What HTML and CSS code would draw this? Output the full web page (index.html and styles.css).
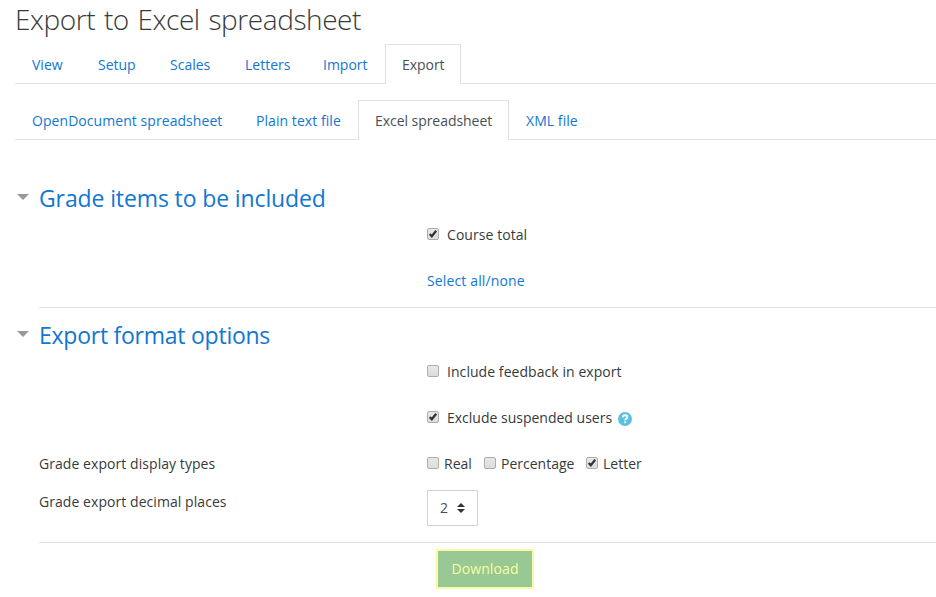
FILE: index.html
```html
<!DOCTYPE html>
<html lang="en">
<head>
<meta charset="utf-8">
<title>Export to Excel spreadsheet</title>
<link rel="stylesheet" href="styles.css">
</head>
<body>
<main class="page">
  <h1 class="title">Export to Excel spreadsheet</h1>
  <nav class="tabs primary">
    <a class="tab">View</a>
    <a class="tab">Setup</a>
    <a class="tab">Scales</a>
    <a class="tab">Letters</a>
    <a class="tab">Import</a>
    <a class="tab active">Export</a>
  </nav>
  <nav class="tabs secondary">
    <a class="tab wide">OpenDocument spreadsheet</a>
    <a class="tab wide">Plain text file</a>
    <a class="tab active">Excel spreadsheet</a>
    <a class="tab wide">XML file</a>
  </nav>
  <form>
    <section class="group">
      <h2 class="legend"><i class="caret"></i><span class="legend-items">Grade items to be included</span></h2>
      <div class="row"><div class="field"><i class="box checked"><svg viewBox="0 0 12 12"><path d="M2.7 6.1l2.1 2.2 4.4-5.5"/></svg></i><span class="option wide">Course total</span></div></div>
      <div class="row"><div class="field"><a class="link">Select all/none</a></div></div>
    </section>
    <section class="group options">
      <h2 class="legend"><i class="caret"></i><span class="legend-format">Export format options</span></h2>
      <div class="row"><div class="field"><i class="box"></i><span class="option wide">Include feedback in export</span></div></div>
      <div class="row"><div class="field"><i class="box checked"><svg viewBox="0 0 12 12"><path d="M2.7 6.1l2.1 2.2 4.4-5.5"/></svg></i><span class="option">Exclude suspended users</span>
        <svg class="help" viewBox="0 0 14 14"><circle cx="7" cy="7" r="7"/><path d="M4.8 5.4C4.9 3.9 5.8 3.3 7 3.3c1.3 0 2.3.8 2.3 1.9 0 1.5-2.1 1.5-2.1 3"/><path d="M7.2 9.3v1.9"/></svg></div></div>
      <div class="row types"><span class="wide">Grade export display types</span><div class="field">
        <i class="box"></i><span class="inline real">Real</span>
        <i class="box"></i><span class="inline percentage">Percentage</span>
        <i class="box checked"><svg viewBox="0 0 12 12"><path d="M2.7 6.1l2.1 2.2 4.4-5.5"/></svg></i><span class="inline">Letter</span></div></div>
      <div class="row places"><span class="wide">Grade export decimal places</span><div class="field">
        <div class="select"><span>2</span><svg viewBox="0 0 8 10"><path d="M4 0l4 4H0zM4 10l4-4H0z"/></svg></div></div></div>
    </section>
    <div class="actions"><button class="download" type="button">Download</button></div>
  </form>
</main>
</body>
</html>
```
FILE: styles.css
```css
* { box-sizing: border-box; }
body {
  margin: 0;
  background: #fff;
  color: #373a3c;
  font: 400 14px/22px "Open Sans", "Noto Sans", sans-serif;
  overflow: hidden;
}
.page { padding-left: 15px; white-space: nowrap; }
.title { margin: 0; height: 44px; font-size: 28px; font-weight: 300; line-height: 38px; letter-spacing: -.42px; word-spacing: 1.8px; }
.tabs { display: grid; height: 40px; border-bottom: 1px solid #dee2e6; }
.tab { height: 40px; padding: 9px 0 0 16px; border: 1px solid transparent; border-bottom: 0; color: #1177d1; }
.active { background: #fff; border-color: #dee2e6; color: #495057; letter-spacing: -.05px; }
.wide { letter-spacing: .06px; }
.primary { grid-template-columns: 66px 72px 75px 78px 79px 76px; }
.secondary { margin-top: 16px; grid-template-columns: 224px 119px 151px 87px; }
.group { margin-left: 24px; height: 137px; border-bottom: 1px solid #dee2e6; }
form { padding-top: 31px; }
.options { height: 235px; }
.legend { display: flex; align-items: center; margin: 0 0 0 -23px; height: 53px; color: #1177d1; font-size: 23px; font-weight: 400; line-height: 40px; letter-spacing: -.12px; }
.legend-format { letter-spacing: -.25px; }
.caret { width: 12px; margin: -2px 10px 0 1px; border: 6px solid transparent; border-top-color: #999; border-bottom: 0; }
.row { display: grid; grid-template-columns: 388px 1fr; height: 46px; }
.field { grid-column: 2; display: flex; height: 22px; align-items: center; }
.box { flex: none; width: 12px; height: 12px; margin-top: -2px; border: 1px solid #adadad; border-radius: 2px; background: linear-gradient(#e8e8e8, #dcdcdc); }
.box svg { display: block; width: 12px; height: 12px; margin: -1px; fill: none; stroke: #333; stroke-width: 2.2; }
.option { margin-left: 8px; }
.link { color: #1177d1; letter-spacing: .14px; }
.help { width: 14px; height: 14px; margin: 2px 0 0 6px; fill: #5bc0de; }
.help path { fill: none; stroke: #fff; stroke-width: 1.9; }
.inline { margin-left: 5px; }
.real { width: 40px; }
.percentage { width: 85px; }
.types { height: 38px; }
.select { display: flex; align-items: center; width: 51px; height: 36px; padding-left: 12px; border: 1px solid #ced4da; color: #495057; }
.select svg { width: 8px; height: 10px; margin-left: 9px; fill: #333; }
.places .field { height: 36px; margin-top: -1px; }
.actions { padding: 6px 0 0 421px; }
.download { display: block; width: 98px; height: 40px; padding: 0; border: 2px solid #f9fda0; background: #98c893; color: #f9fda0; font: inherit; letter-spacing: .1px; }
```
